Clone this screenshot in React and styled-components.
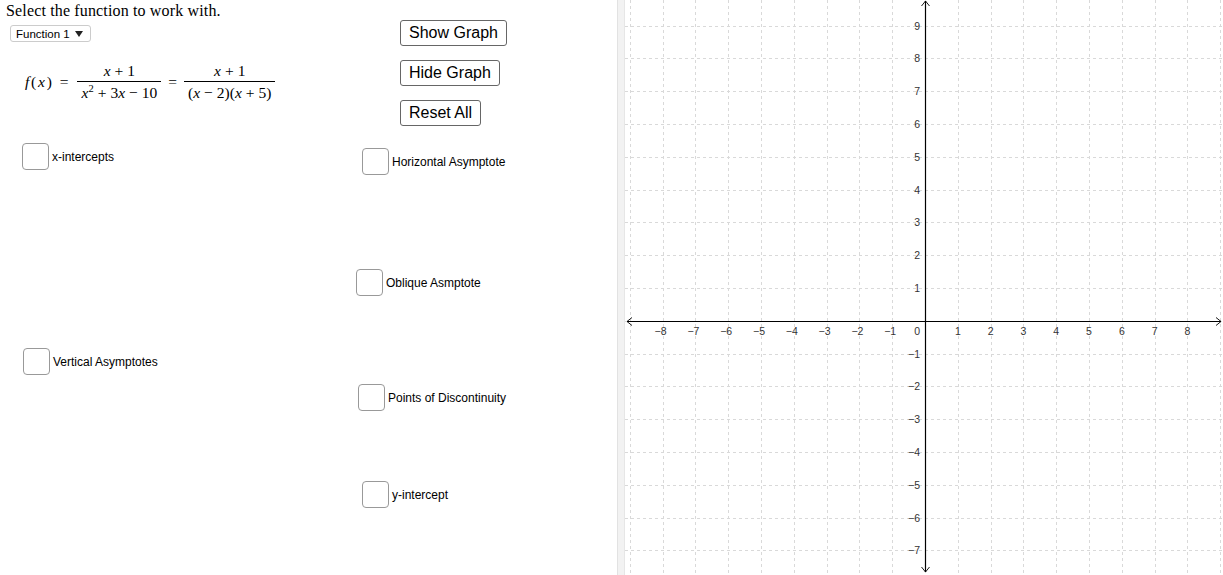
import styled, { createGlobalStyle } from 'styled-components';

const GlobalStyle = createGlobalStyle`
  html, body {
    margin: 0;
    padding: 0;
    background: #fff;
    overflow: hidden;
  }
  body {
    font-family: "Liberation Sans", Arial, sans-serif;
  }
`;

const Page = styled.div`
  display: flex;
  width: 1223px;
  height: 575px;
  background: #fff;
`;

const Workspace = styled.div`
  position: relative;
  width: 617px;
  height: 100%;
  flex-shrink: 0;
`;

const Header = styled.div`
  display: flex;
  flex-direction: column;
  align-items: flex-start;
  padding: 2px 0 0 6px;
`;

const Prompt = styled.div`
  font-family: "Liberation Serif", "Times New Roman", serif;
  font-size: 16px;
  line-height: 18px;
  letter-spacing: 0.15px;
  color: #000;
`;

const Dropdown = styled.div`
  display: inline-flex;
  align-items: center;
  gap: 5px;
  margin: 5px 0 0 4px;
  height: 17px;
  padding: 0 7px 0 5px;
  border: 1px solid #ccc;
  border-radius: 3px;
  font-size: 11.5px;
  color: #000;
  box-sizing: border-box;
`;

const Caret = styled.span`
  width: 0;
  height: 0;
  border-left: 4px solid transparent;
  border-right: 4px solid transparent;
  border-top: 6px solid #222;
  margin-top: 1px;
`;

const Formula = styled.div`
  display: inline-flex;
  align-items: center;
  gap: 3px;
  margin: 21px 0 0 19px;
  font-family: "Liberation Serif", "Times New Roman", serif;
  font-size: 15.5px;
  color: #000;
`;

const Lead = styled.span`
  letter-spacing: 1.8px;
`;

const I = styled.i`
  font-style: italic;
`;

const Frac = styled.span`
  display: inline-flex;
  flex-direction: column;
  align-items: center;
`;

const Num = styled.span`
  padding: 0 4px 2px;
  line-height: 16px;
`;

const Den = styled.span`
  padding: 3px 4px 0;
  line-height: 16px;
  border-top: 1px solid #000;
`;

const Sup = styled.sup`
  font-size: 10.5px;
  vertical-align: 6px;
  line-height: 0;
`;

const Op = styled.span`
  letter-spacing: 0;
  padding: 0 ${(p) => (p.$wide ? 6 : 4)}px;
`;

const ButtonStack = styled.div`
  position: absolute;
  left: 400px;
  top: 20px;
  display: flex;
  flex-direction: column;
  align-items: flex-start;
  gap: 14px;
`;

const Button = styled.button`
  height: 26px;
  padding: 0 8px;
  background: #fff;
  border: 1px solid #666;
  border-radius: 3px;
  font-family: "Liberation Sans", Arial, sans-serif;
  font-size: 16px;
  color: #000;
  cursor: pointer;
`;

const Check = styled.label`
  position: absolute;
  left: ${(p) => p.$x}px;
  top: ${(p) => p.$y}px;
  display: flex;
  align-items: center;
  gap: 3px;
  font-size: 12px;
  color: #000;
`;

const Box = styled.span`
  width: 27px;
  height: 27px;
  box-sizing: border-box;
  border: 1.5px solid #999;
  border-radius: 4px;
  background: #fff;
`;

const Splitter = styled.div`
  width: 6px;
  flex-shrink: 0;
  background: #f2f2f2;
  border-left: 1px solid #e2e2e2;
  border-right: 1px solid #e6e6e6;
`;

const GraphView = styled.div`
  flex: 1;
  height: 100%;
  overflow: hidden;
`;

const checks = [
  { label: 'x-intercepts', x: 22, y: 143 },
  { label: 'Horizontal Asymptote', x: 362, y: 148 },
  { label: 'Oblique Asmptote', x: 356, y: 269 },
  { label: 'Vertical Asymptotes', x: 23, y: 348 },
  { label: 'Points of Discontinuity', x: 358, y: 384 },
  { label: 'y-intercept', x: 362, y: 481 },
];

const W = 598;
const H = 575;
const OX = 300;
const OY = 320.7;
const U = 32.8;
const px = (v) => Math.round(v) + 0.5;
const minus = (n) => (n < 0 ? '\u2212' + Math.abs(n) : String(n));

function Graph() {
  const xs = [];
  for (let k = -9; k <= 9; k++) xs.push(k);
  const ys = [];
  for (let k = -8; k <= 9; k++) ys.push(k);
  const ax = px(OX);
  const ay = px(OY);
  return (
    <svg width={W} height={H} viewBox={`0 0 ${W} ${H}`}>
      <g stroke="#d9d9d9" strokeWidth="1" strokeDasharray="3 3">
        {xs.map((k) => (
          <line key={'v' + k} x1={px(OX + k * U)} y1="0" x2={px(OX + k * U)} y2={H} />
        ))}
        {ys.map((k) => (
          <line key={'h' + k} x1="0" y1={px(OY - k * U)} x2={W} y2={px(OY - k * U)} />
        ))}
      </g>
      <g stroke="#000" strokeWidth="1.2" fill="none">
        <line x1="2" y1={ay} x2={W - 2} y2={ay} />
        <line x1={ax} y1="1" x2={ax} y2={H - 3} />
        <polyline points={`7,${ay - 4} 2,${ay} 7,${ay + 4}`} strokeWidth="0.9" />
        <polyline points={`${W - 7},${ay - 4} ${W - 2},${ay} ${W - 7},${ay + 4}`} strokeWidth="0.9" />
        <polyline points={`${ax - 4},6 ${ax},1 ${ax + 4},6`} strokeWidth="0.9" />
        <polyline points={`${ax - 4},${H - 8} ${ax},${H - 3} ${ax + 4},${H - 8}`} strokeWidth="0.9" />
      </g>
      <g fill="#333" fontFamily="Liberation Sans, Arial, sans-serif" fontSize="10.5">
        {xs
          .filter((k) => k !== 0 && Math.abs(k) <= 8)
          .map((k) => (
            <text key={'xl' + k} x={OX + k * U - (k < 0 ? 2 : 0)} y={OY + 14} textAnchor="middle">
              {minus(k)}
            </text>
          ))}
        <text x={OX - 5} y={OY + 14} textAnchor="end">0</text>
        {ys
          .filter((k) => k !== 0 && k >= -7)
          .map((k) => (
            <text key={'yl' + k} x={OX - 5} y={OY - k * U + 4} textAnchor="end">
              {minus(k)}
            </text>
          ))}
      </g>
    </svg>
  );
}

export default function App() {
  return (
    <>
      <GlobalStyle />
      <Page>
        <Workspace>
          <Header>
            <Prompt>Select the function to work with.</Prompt>
            <Dropdown>
              Function 1 <Caret />
            </Dropdown>
            <Formula>
              <Lead>
                <I>f</I>(<I>x</I>)<Op $wide>=</Op>
              </Lead>
              <Frac>
                <Num>
                  <I>x</I>
                  <Op>+</Op>1
                </Num>
                <Den>
                  <I>x</I>
                  <Sup>2</Sup>
                  <Op>+</Op>3<I>x</I>
                  <Op>−</Op>10
                </Den>
              </Frac>
              <Op>=</Op>
              <Frac>
                <Num>
                  <I>x</I>
                  <Op>+</Op>1
                </Num>
                <Den>
                  (<I>x</I>
                  <Op>−</Op>2)(<I>x</I>
                  <Op>+</Op>5)
                </Den>
              </Frac>
            </Formula>
          </Header>
          <ButtonStack>
            <Button>Show Graph</Button>
            <Button>Hide Graph</Button>
            <Button>Reset All</Button>
          </ButtonStack>
          {checks.map((c) => (
            <Check key={c.label} $x={c.x} $y={c.y}>
              <Box />
              {c.label}
            </Check>
          ))}
        </Workspace>
        <Splitter />
        <GraphView>
          <Graph />
        </GraphView>
      </Page>
    </>
  );
}
